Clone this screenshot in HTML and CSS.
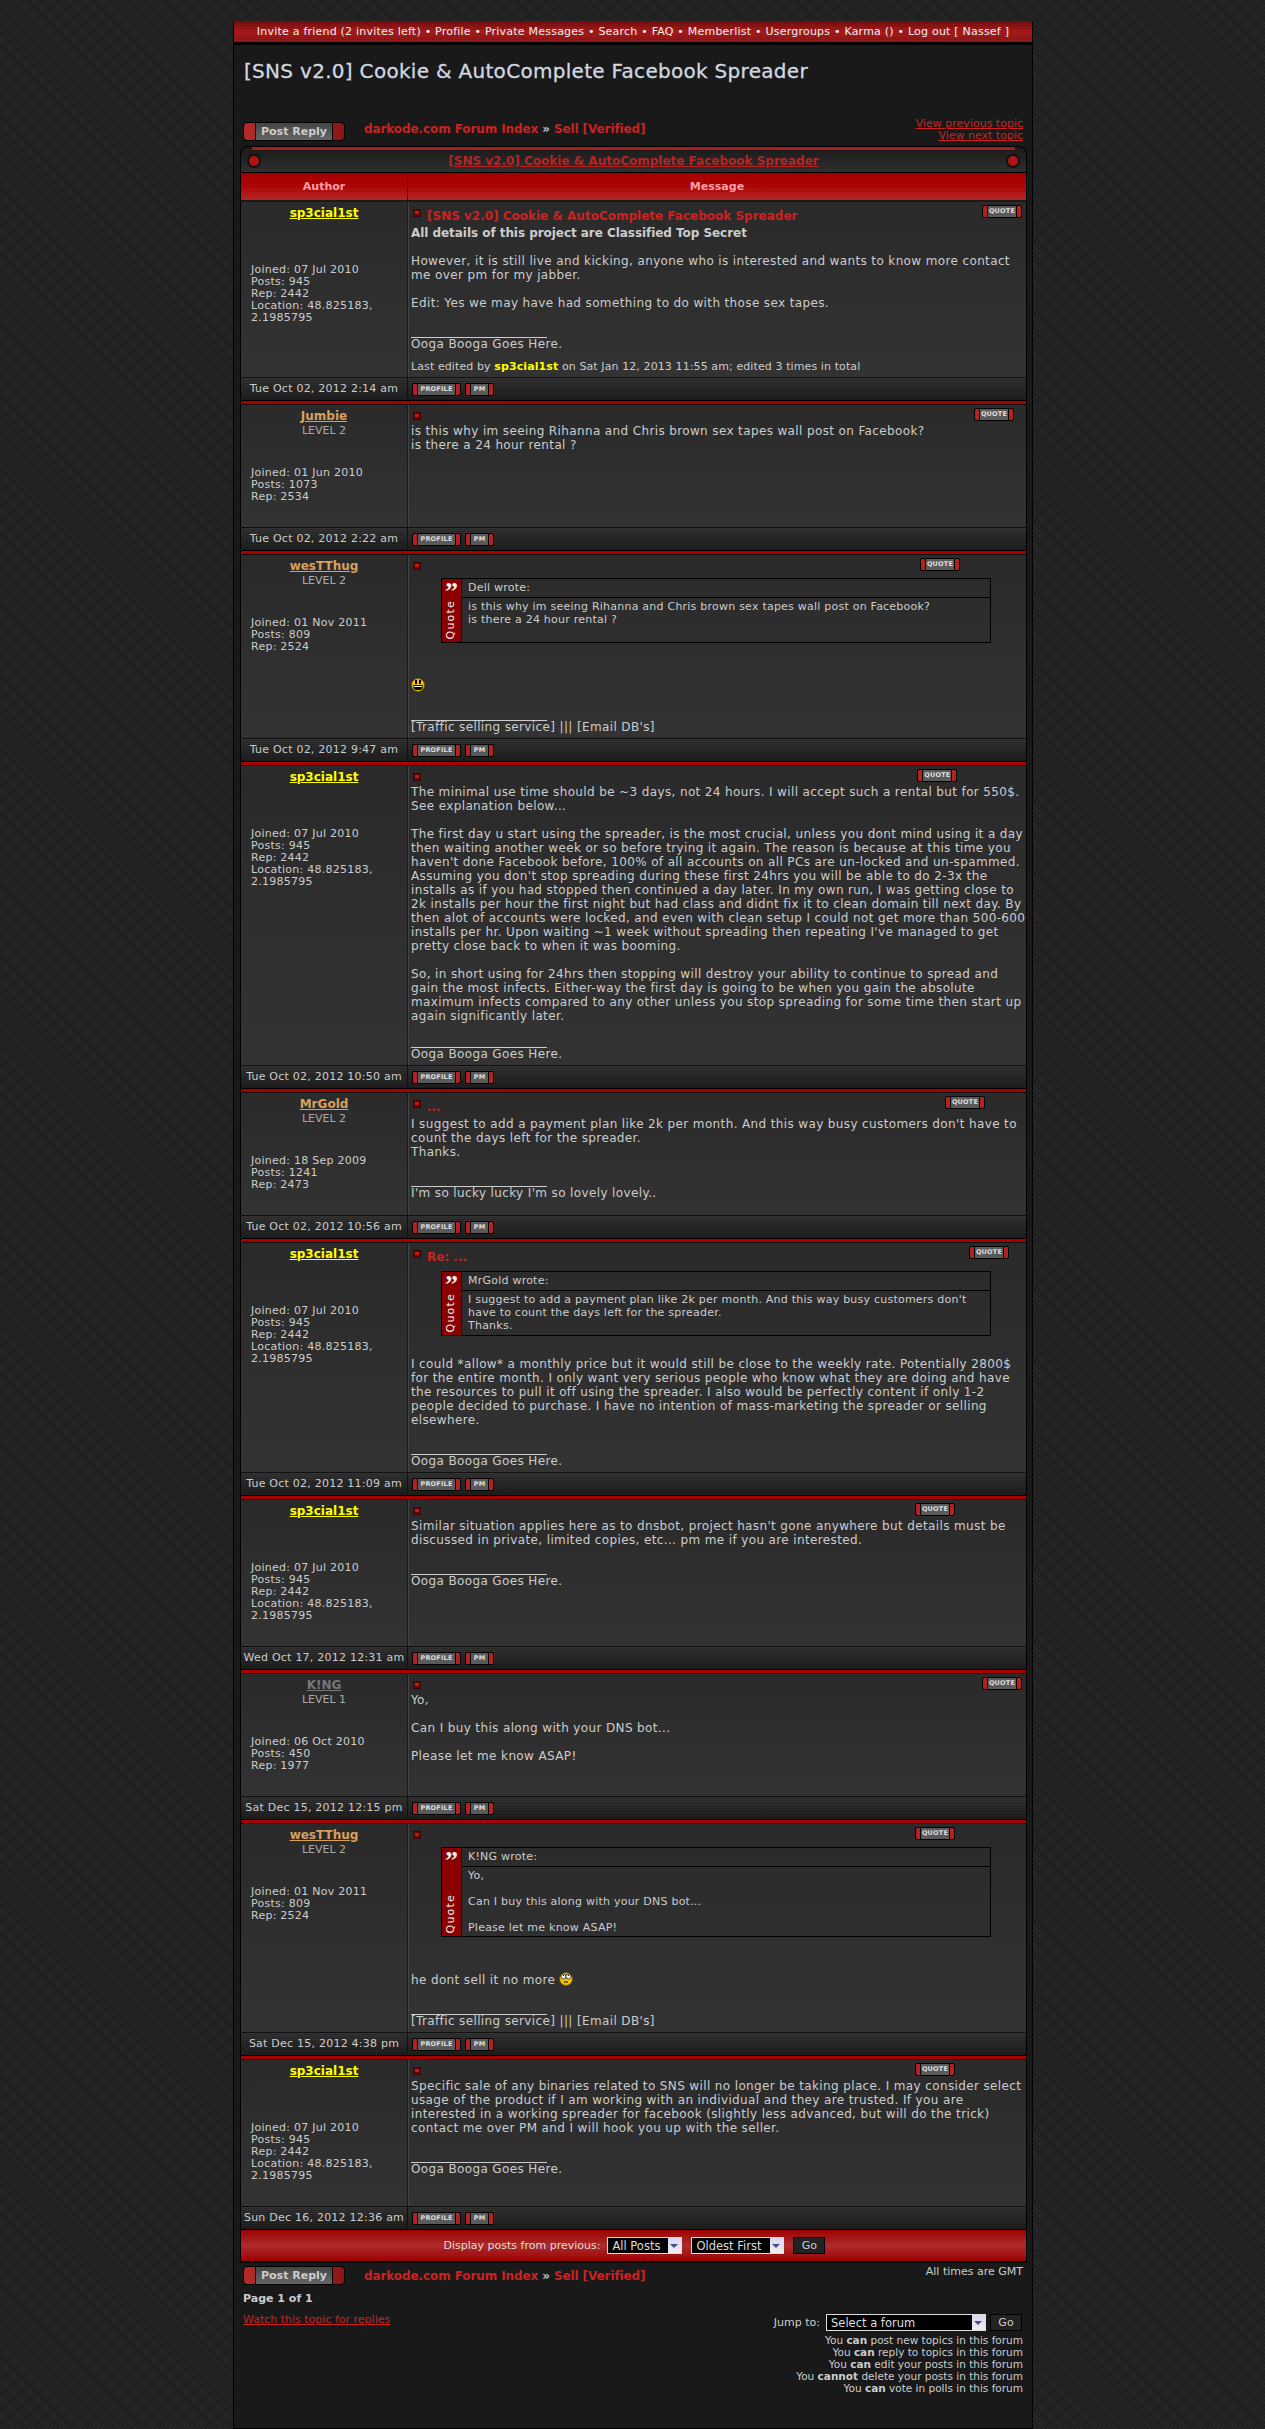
FILE: index.html
```html
<!DOCTYPE html>
<html lang="en">
<head>
  <meta charset="UTF-8" />
  <title>[SNS v2.0] Cookie &amp; AutoComplete Facebook Spreader</title>
  <link rel="stylesheet" href="styles.css">
</head>
<body>
<div class="wrap">

  <div class="topnav">
    Invite a friend (2 invites left) &bull; Profile &bull; Private Messages &bull; Search &bull; FAQ &bull; Memberlist &bull; Usergroups &bull; Karma () &bull; Log out [ Nassef ]
  </div>

  <h1 class="page-title">[SNS v2.0] Cookie &amp; AutoComplete Facebook Spreader</h1>

  <div class="bar-top">
    <a class="reply-btn"><span>Post Reply</span></a>
    <div class="crumbs"><a>darkode.com Forum Index</a> <i>&raquo;</i> <a>Sell [Verified]</a></div>
    <div class="topic-links"><a>View previous topic</a><a>View next topic</a></div>
  </div>

  <div class="cat-head">
    <span class="dot"></span>
    <a>[SNS v2.0] Cookie &amp; AutoComplete Facebook Spreader</a>
    <span class="dot"></span>
  </div>

  <div class="topic">
    <div class="head-row">
      <div class="head-author">Author</div>
      <div class="head-msg">Message</div>
    </div>

    <!-- post 1 -->
    <div class="post">
      <div class="author">
        <div class="author-top"><a class="name name-gold">sp3cial1st</a></div>
        <div class="details">Joined: 07 Jul 2010<br>Posts: 945<br>Rep: 2442<br>Location: 48.825183,<br>2.1985795</div>
      </div>
      <div class="msg">
        <div class="msg-head head-subject">
          <span class="mini-icon"></span>
          <span class="subject">[SNS v2.0] Cookie &amp; AutoComplete Facebook Spreader</span>
          <a class="btn btn-quote q-a">QUOTE</a>
        </div>
        <div class="text">
          <b>All details of this project are Classified Top Secret</b><br><br>
          However, it is still live and kicking, anyone who is interested and wants to know more contact<br>
          me over pm for my jabber.<br><br>
          Edit: Yes we may have had something to do with those sex tapes.
        </div>
        <div class="sig">Ooga Booga Goes Here.</div>
        <div class="edited">Last edited by <b>sp3cial1st</b> on Sat Jan 12, 2013 11:55 am; edited 3 times in total</div>
      </div>
    </div>
    <div class="post-foot">
      <div class="stamp">Tue Oct 02, 2012 2:14 am</div>
      <div class="foot-btns"><a class="btn btn-profile">PROFILE</a><a class="btn btn-pm">PM</a></div>
    </div>
    <div class="post-sep"></div>

    <!-- post 2 -->
    <div class="post">
      <div class="author">
        <div class="author-top"><a class="name name-tan">Jumbie</a><div class="level">LEVEL 2</div></div>
        <div class="details">Joined: 01 Jun 2010<br>Posts: 1073<br>Rep: 2534</div>
      </div>
      <div class="msg">
        <div class="msg-head">
          <span class="mini-icon"></span>
          <a class="btn btn-quote q-b">QUOTE</a>
        </div>
        <div class="text">
          is this why im seeing Rihanna and Chris brown sex tapes wall post on Facebook?<br>
          is there a 24 hour rental ?
        </div>
      </div>
    </div>
    <div class="post-foot">
      <div class="stamp">Tue Oct 02, 2012 2:22 am</div>
      <div class="foot-btns"><a class="btn btn-profile">PROFILE</a><a class="btn btn-pm">PM</a></div>
    </div>
    <div class="post-sep"></div>

    <!-- post 3 -->
    <div class="post">
      <div class="author">
        <div class="author-top"><a class="name name-tan">wesTThug</a><div class="level">LEVEL 2</div></div>
        <div class="details">Joined: 01 Nov 2011<br>Posts: 809<br>Rep: 2524</div>
      </div>
      <div class="msg">
        <div class="msg-head">
          <span class="mini-icon"></span>
          <a class="btn btn-quote q-c">QUOTE</a>
        </div>
        <div class="quote">
          <div class="quote-side"><span class="quote-mark">&rdquo;</span><span class="quote-word">Quote</span></div>
          <div class="quote-body">
            <div class="quote-who">Dell wrote:</div>
            <div class="quote-text">is this why im seeing Rihanna and Chris brown sex tapes wall post on Facebook?<br>is there a 24 hour rental ?</div>
          </div>
        </div>
        <div class="text">
          <br>
          <svg class="smile" viewBox="0 0 14 14"><circle cx="7" cy="7" r="6.5" fill="#f7c600" stroke="#6b5200"/><rect x="4" y="2" width="2" height="4" fill="#000"/><rect x="8" y="2" width="2" height="4" fill="#000"/><path d="M2 7h10l-1 4-2 1H5l-2-1z" fill="#000"/><path d="M3 8h8v1H3z" fill="#fff"/></svg>
        </div>
        <div class="sig">[Traffic selling service] ||| [Email DB's]</div>
      </div>
    </div>
    <div class="post-foot">
      <div class="stamp">Tue Oct 02, 2012 9:47 am</div>
      <div class="foot-btns"><a class="btn btn-profile">PROFILE</a><a class="btn btn-pm">PM</a></div>
    </div>
    <div class="post-sep"></div>

    <!-- post 4 -->
    <div class="post">
      <div class="author">
        <div class="author-top"><a class="name name-gold">sp3cial1st</a></div>
        <div class="details">Joined: 07 Jul 2010<br>Posts: 945<br>Rep: 2442<br>Location: 48.825183,<br>2.1985795</div>
      </div>
      <div class="msg">
        <div class="msg-head">
          <span class="mini-icon"></span>
          <a class="btn btn-quote q-f">QUOTE</a>
        </div>
        <div class="text">
          The minimal use time should be ~3 days, not 24 hours. I will accept such a rental but for 550$.<br>
          See explanation below...<br><br>
          The first day u start using the spreader, is the most crucial, unless you dont mind using it a day<br>
          then waiting another week or so before trying it again. The reason is because at this time you<br>
          haven't done Facebook before, 100% of all accounts on all PCs are un-locked and un-spammed.<br>
          Assuming you don't stop spreading during these first 24hrs you will be able to do 2-3x the<br>
          installs as if you had stopped then continued a day later. In my own run, I was getting close to<br>
          2k installs per hour the first night but had class and didnt fix it to clean domain till next day. By<br>
          then alot of accounts were locked, and even with clean setup I could not get more than 500-600<br>
          installs per hr. Upon waiting ~1 week without spreading then repeating I've managed to get<br>
          pretty close back to when it was booming.<br><br>
          So, in short using for 24hrs then stopping will destroy your ability to continue to spread and<br>
          gain the most infects. Either-way the first day is going to be when you gain the absolute<br>
          maximum infects compared to any other unless you stop spreading for some time then start up<br>
          again significantly later.
        </div>
        <div class="sig sig-tight">Ooga Booga Goes Here.</div>
      </div>
    </div>
    <div class="post-foot">
      <div class="stamp">Tue Oct 02, 2012 10:50 am</div>
      <div class="foot-btns"><a class="btn btn-profile">PROFILE</a><a class="btn btn-pm">PM</a></div>
    </div>
    <div class="post-sep"></div>

    <!-- post 5 -->
    <div class="post">
      <div class="author">
        <div class="author-top"><a class="name name-tan">MrGold</a><div class="level">LEVEL 2</div></div>
        <div class="details">Joined: 18 Sep 2009<br>Posts: 1241<br>Rep: 2473</div>
      </div>
      <div class="msg">
        <div class="msg-head head-subject">
          <span class="mini-icon"></span>
          <span class="subject">...</span>
          <a class="btn btn-quote q-d">QUOTE</a>
        </div>
        <div class="text">
          I suggest to add a payment plan like 2k per month. And this way busy customers don't have to<br>
          count the days left for the spreader.<br>
          Thanks.
        </div>
        <div class="sig">I'm so lucky lucky I'm so lovely lovely..</div>
      </div>
    </div>
    <div class="post-foot">
      <div class="stamp">Tue Oct 02, 2012 10:56 am</div>
      <div class="foot-btns"><a class="btn btn-profile">PROFILE</a><a class="btn btn-pm">PM</a></div>
    </div>
    <div class="post-sep"></div>

    <!-- post 6 -->
    <div class="post">
      <div class="author">
        <div class="author-top"><a class="name name-gold">sp3cial1st</a></div>
        <div class="details">Joined: 07 Jul 2010<br>Posts: 945<br>Rep: 2442<br>Location: 48.825183,<br>2.1985795</div>
      </div>
      <div class="msg">
        <div class="msg-head head-subject">
          <span class="mini-icon"></span>
          <span class="subject">Re: ...</span>
          <a class="btn btn-quote q-e">QUOTE</a>
        </div>
        <div class="quote">
          <div class="quote-side"><span class="quote-mark">&rdquo;</span><span class="quote-word">Quote</span></div>
          <div class="quote-body">
            <div class="quote-who">MrGold wrote:</div>
            <div class="quote-text">I suggest to add a payment plan like 2k per month. And this way busy customers don't<br>have to count the days left for the spreader.<br>Thanks.</div>
          </div>
        </div>
        <div class="text">
          I could *allow* a monthly price but it would still be close to the weekly rate. Potentially 2800$<br>
          for the entire month. I only want very serious people who know what they are doing and have<br>
          the resources to pull it off using the spreader. I also would be perfectly content if only 1-2<br>
          people decided to purchase. I have no intention of mass-marketing the spreader or selling<br>
          elsewhere.
        </div>
        <div class="sig">Ooga Booga Goes Here.</div>
      </div>
    </div>
    <div class="post-foot">
      <div class="stamp">Tue Oct 02, 2012 11:09 am</div>
      <div class="foot-btns"><a class="btn btn-profile">PROFILE</a><a class="btn btn-pm">PM</a></div>
    </div>
    <div class="post-sep"></div>

    <!-- post 7 -->
    <div class="post">
      <div class="author">
        <div class="author-top"><a class="name name-gold">sp3cial1st</a></div>
        <div class="details">Joined: 07 Jul 2010<br>Posts: 945<br>Rep: 2442<br>Location: 48.825183,<br>2.1985795</div>
      </div>
      <div class="msg">
        <div class="msg-head">
          <span class="mini-icon"></span>
          <a class="btn btn-quote q-f">QUOTE</a>
        </div>
        <div class="text">
          Similar situation applies here as to dnsbot, project hasn't gone anywhere but details must be<br>
          discussed in private, limited copies, etc... pm me if you are interested.
        </div>
        <div class="sig">Ooga Booga Goes Here.</div>
      </div>
    </div>
    <div class="post-foot">
      <div class="stamp">Wed Oct 17, 2012 12:31 am</div>
      <div class="foot-btns"><a class="btn btn-profile">PROFILE</a><a class="btn btn-pm">PM</a></div>
    </div>
    <div class="post-sep"></div>

    <!-- post 8 -->
    <div class="post">
      <div class="author">
        <div class="author-top"><a class="name name-gray">K!NG</a><div class="level">LEVEL 1</div></div>
        <div class="details">Joined: 06 Oct 2010<br>Posts: 450<br>Rep: 1977</div>
      </div>
      <div class="msg">
        <div class="msg-head">
          <span class="mini-icon"></span>
          <a class="btn btn-quote q-a">QUOTE</a>
        </div>
        <div class="text">
          Yo,<br><br>
          Can I buy this along with your DNS bot...<br><br>
          Please let me know ASAP!
        </div>
      </div>
    </div>
    <div class="post-foot">
      <div class="stamp">Sat Dec 15, 2012 12:15 pm</div>
      <div class="foot-btns"><a class="btn btn-profile">PROFILE</a><a class="btn btn-pm">PM</a></div>
    </div>
    <div class="post-sep"></div>

    <!-- post 9 -->
    <div class="post">
      <div class="author">
        <div class="author-top"><a class="name name-tan">wesTThug</a><div class="level">LEVEL 2</div></div>
        <div class="details">Joined: 01 Nov 2011<br>Posts: 809<br>Rep: 2524</div>
      </div>
      <div class="msg">
        <div class="msg-head">
          <span class="mini-icon"></span>
          <a class="btn btn-quote q-f">QUOTE</a>
        </div>
        <div class="quote">
          <div class="quote-side"><span class="quote-mark">&rdquo;</span><span class="quote-word">Quote</span></div>
          <div class="quote-body">
            <div class="quote-who">K!NG wrote:</div>
            <div class="quote-text">Yo,<br><br>Can I buy this along with your DNS bot...<br><br>Please let me know ASAP!</div>
          </div>
        </div>
        <div class="text text-tall">
          <br>
          he dont sell it no more
          <svg class="smile" viewBox="0 0 14 14"><circle cx="7" cy="7" r="6.5" fill="#f7c600" stroke="#6b5200"/><circle cx="4.5" cy="4.5" r="2.5" fill="#fff" stroke="#000" stroke-width=".7"/><circle cx="9.5" cy="4.5" r="2.5" fill="#fff" stroke="#000" stroke-width=".7"/><rect x="4" y="3" width="1" height="1" fill="#000"/><rect x="9" y="3" width="1" height="1" fill="#000"/><path d="M5 10h4" stroke="#000"/></svg>
        </div>
        <div class="sig">[Traffic selling service] ||| [Email DB's]</div>
      </div>
    </div>
    <div class="post-foot">
      <div class="stamp">Sat Dec 15, 2012 4:38 pm</div>
      <div class="foot-btns"><a class="btn btn-profile">PROFILE</a><a class="btn btn-pm">PM</a></div>
    </div>
    <div class="post-sep"></div>

    <!-- post 10 -->
    <div class="post">
      <div class="author">
        <div class="author-top"><a class="name name-gold">sp3cial1st</a></div>
        <div class="details">Joined: 07 Jul 2010<br>Posts: 945<br>Rep: 2442<br>Location: 48.825183,<br>2.1985795</div>
      </div>
      <div class="msg">
        <div class="msg-head">
          <span class="mini-icon"></span>
          <a class="btn btn-quote q-f">QUOTE</a>
        </div>
        <div class="text">
          Specific sale of any binaries related to SNS will no longer be taking place. I may consider select<br>
          usage of the product if I am working with an individual and they are trusted. If you are<br>
          interested in a working spreader for facebook (slightly less advanced, but will do the trick)<br>
          contact me over PM and I will hook you up with the seller.
        </div>
        <div class="sig">Ooga Booga Goes Here.</div>
      </div>
    </div>
    <div class="post-foot">
      <div class="stamp">Sun Dec 16, 2012 12:36 am</div>
      <div class="foot-btns"><a class="btn btn-profile">PROFILE</a><a class="btn btn-pm">PM</a></div>
    </div>

    <div class="display-bar">
      <span>Display posts from previous:</span>
      <span class="pick pick-posts"><select><option>All Posts</option></select></span>
      <span class="pick pick-order"><select><option>Oldest First</option></select></span>
      <button class="go">Go</button>
    </div>
  </div>

  <div class="bar-bottom">
    <a class="reply-btn"><span>Post Reply</span></a>
    <div class="crumbs"><a>darkode.com Forum Index</a> <i>&raquo;</i> <a>Sell [Verified]</a></div>
    <div class="times">All times are GMT</div>
  </div>

  <div class="page-foot">
    <div class="page-left">
      <div class="pages">Page 1 of 1</div>
      <a class="watch">Watch this topic for replies</a>
    </div>
    <div class="page-right">
      <div class="jump">
        <span>Jump to:</span>
        <span class="pick pick-forum"><select><option>Select a forum</option></select></span>
        <button class="go">Go</button>
      </div>
      <div class="perms">
        You <b>can</b> post new topics in this forum<br>
        You <b>can</b> reply to topics in this forum<br>
        You <b>can</b> edit your posts in this forum<br>
        You <b>cannot</b> delete your posts in this forum<br>
        You <b>can</b> vote in polls in this forum
      </div>
    </div>
  </div>

</div>
</body>
</html>
```

FILE: styles.css
```css
body {
  margin: 0;
  background-color: #232323;
  background-image: repeating-linear-gradient(45deg, #282828 0, #282828 1px, #1f1f1f 1px, #1f1f1f 3px);
  font-family: "DejaVu Sans", Verdana, sans-serif;
  font-size: 11px;
  color: #ccc;
}

a {
  color: #cc2222;
}

.wrap {
  box-sizing: border-box;
  width: 800px;
  height: 2408px;
  margin: 21px 0 0 233px;
  background-color: #191919;
  border: 1px solid #000;
  border-top: 0;
}

/* top bar */
.topnav {
  height: 21px;
  line-height: 21px;
  text-align: center;
  font-size: 11px;
  letter-spacing: 0.22px;
  color: #eee;
  background: repeating-linear-gradient(0deg, rgba(0,0,0,0.1) 0, rgba(0,0,0,0.1) 1px, transparent 1px, transparent 2px),
              linear-gradient(#70100f, #a91d1d 50%, #8a1a1a);
  border-bottom: 3px solid #000;
}

.page-title {
  margin: 14px 0 0 10px;
  height: 63px;
  font-size: 20px;
  line-height: 24px;
  letter-spacing: 0.3px;
  font-weight: normal;
  color: #d0d8e0;
  -webkit-text-stroke: 0.3px #d0d8e0;
}

/* buttons and crumbs */
.bar-top,
.bar-bottom {
  display: flex;
  padding: 0 9px;
  height: 24px;
}

.reply-btn {
  box-sizing: border-box;
  display: block;
  width: 102px;
  height: 19px;
  border: 1px solid #000;
  border-radius: 4px;
  background: linear-gradient(90deg, #b32a2a, #8c1616);
}

.reply-btn span {
  display: block;
  height: 17px;
  margin: 0 11px;
  line-height: 17px;
  text-align: center;
  font-size: 11px;
  font-weight: bold;
  color: #ccc;
  background: linear-gradient(#444, #666);
  border-left: 1px solid #000;
  border-right: 1px solid #000;
}

.crumbs {
  margin-left: 19px;
  font-size: 12px;
  line-height: 15px;
  font-weight: bold;
  letter-spacing: -0.1px;
  color: #cc2222;
}

.crumbs i {
  font-style: normal;
  color: #b8c4cc;
}

.topic-links {
  margin-left: auto;
  margin-top: -4px;
  font-size: 11px;
  line-height: 12px;
  text-align: right;
}

.topic-links a {
  display: block;
  text-decoration: underline;
}

/* table */
.cat-head {
  display: flex;
  align-items: center;
  justify-content: space-between;
  box-sizing: border-box;
  height: 26px;
  margin: 0 5px 0 6px;
  padding: 3px 8px 0;
  background: linear-gradient(#1a1a1a, #2e2e2e);
  border: 1px solid #000;
  border-bottom: 0;
  border-radius: 8px 8px 0 0;
  font-size: 12px;
  font-weight: bold;
  position: relative;
}

.cat-head::before {
  content: "";
  position: absolute;
  left: 11px;
  right: 11px;
  top: 0;
  height: 3px;
  background: #a51c1c;
}

.cat-head a {
  text-decoration: underline;
  color: #b52525;
}

.dot {
  width: 10px;
  height: 10px;
  border-radius: 50%;
  background: #b01414;
  box-shadow: 0 0 0 2px #111;
}

.topic {
  margin: 0 5px 0 6px;
  border: 1px solid #000;
  border-bottom: 2px solid #000;
  background: #1a1a1a;
}

.head-row {
  display: grid;
  grid-template-columns: 167px 1fr;
  height: 27px;
  margin-bottom: 2px;
  line-height: 27px;
  text-align: center;
  font-weight: bold;
  color: #ff9fa8;
  background: repeating-linear-gradient(0deg, rgba(0,0,0,0.08) 0, rgba(0,0,0,0.08) 1px, transparent 1px, transparent 2px),
              linear-gradient(#a80000, #ad0808 50%, #b92a2a);
}

.head-author {
  border-right: 1px solid #7a0000;
}

.post {
  display: grid;
  grid-template-columns: 167px 1fr;
  background: linear-gradient(#2a2a2a, #333);
}

.author {
  padding: 4px 0 24px 10px;
  border-right: 1px solid #1a1a1a;
  box-shadow: 1px 0 0 #444;
}

.author-top {
  height: 58px;
  margin-left: -10px;
  text-align: center;
}

.name {
  display: inline-block;
  font-size: 12px;
  line-height: 14px;
  font-weight: bold;
  text-decoration: underline;
}

.name-gold { color: #ffff00; }
.name-tan { color: #d8a05c; }
.name-gray { color: #777; }

.level {
  font-size: 11px;
  line-height: 12px;
  margin-top: 2px;
  color: #aaa;
}

.details {
  font-size: 11px;
  line-height: 12px;
  letter-spacing: 0.25px;
}

.msg {
  position: relative;
  padding: 0 3px 4px 3px;
  font-size: 12px;
  line-height: 14px;
  letter-spacing: 0.37px;
}

.msg-head {
  display: flex;
  height: 19px;
  align-items: flex-start;
}

.head-subject {
  height: 24px;
}

.mini-icon {
  position: relative;
  box-sizing: border-box;
  width: 8px;
  height: 8px;
  margin: 7px 5px 0 2px;
  background: #5c0808;
  border: 1px solid #3a0505;
}

.mini-icon::after {
  content: "";
  position: absolute;
  left: 1px;
  top: 1px;
  width: 4px;
  height: 3px;
  background: #c81414;
}

.head-subject .mini-icon {
  margin-right: 6px;
}

.subject {
  margin-top: 7px;
  font-weight: bold;
  letter-spacing: 0;
  color: #cc2222;
}

.btn {
  box-sizing: border-box;
  display: block;
  height: 13px;
  padding: 0 5px;
  line-height: 11px;
  text-align: center;
  font-family: "DejaVu Sans", sans-serif;
  font-size: 6.5px;
  font-weight: bold;
  letter-spacing: 0.2px;
  color: #ddd;
  background: linear-gradient(90deg, #b52020 4px, #000 4px, #000 5px, #5a5a5a 5px, #5a5a5a calc(100% - 5px), #000 calc(100% - 5px), #000 calc(100% - 4px), #b52020 calc(100% - 4px));
  border: 1px solid #000;
  border-radius: 2px;
}

.btn-quote {
  width: 40px;
  margin: 3px 0 0 auto;
}

/* the quote button does not sit at the same place on every post */
.q-a { margin-right: 1px; }
.q-b { margin-right: 9px; }
.q-c { margin-right: 63px; }
.q-d { margin-right: 38px; }
.q-e { margin-right: 14px; }
.q-f { margin-right: 68px; }

.quote {
  display: flex;
  width: 550px;
  min-height: 65px;
  box-sizing: border-box;
  margin: 4px 0 21px 30px;
  border: 1px solid #000;
}

.quote-side {
  position: relative;
  flex: none;
  width: 19px;
  background: #8a0000;
  color: #eee;
  border-right: 1px solid #000;
}

.quote-mark {
  position: absolute;
  left: 3px;
  top: 1px;
  font-size: 26px;
  line-height: 24px;
  font-weight: bold;
  font-family: "Liberation Serif", serif;
}

.quote-word {
  position: absolute;
  left: 2px;
  bottom: 3px;
  writing-mode: vertical-rl;
  transform: rotate(180deg);
  font-size: 11px;
  line-height: 14px;
  letter-spacing: 1.2px;
}

.quote-body {
  flex: 1;
  font-size: 11px;
  letter-spacing: 0.23px;
}

.quote-who {
  height: 18px;
  padding-left: 6px;
  line-height: 18px;
  border-bottom: 1px solid #000;
}

.quote-text {
  padding: 2px 6px;
  line-height: 13px;
  white-space: nowrap;
}

.text {
  white-space: nowrap;
}

.text-tall {
  margin-bottom: 2px;
}

.text b {
  letter-spacing: -0.05px;
}

.sig {
  margin-top: 14px;
}

.sig-tight {
  margin-top: 11px;
}

.sig::before {
  content: "";
  display: block;
  width: 136px;
  height: 14px;
  border-bottom: 1px solid #ccc;
  box-sizing: border-box;
  margin-bottom: -1px;
}

.text .smile {
  width: 14px;
  height: 14px;
  vertical-align: -2px;
}

.edited {
  margin-top: 10px;
  font-size: 11px;
  line-height: 12px;
  letter-spacing: 0.1px;
}

.edited b {
  color: #ffff00;
}

.post-foot {
  display: grid;
  grid-template-columns: 167px 1fr;
  height: 23px;
  align-items: center;
  border-top: 1px solid #111;
  box-sizing: border-box;
  background: repeating-linear-gradient(0deg, rgba(0,0,0,0.15) 0, rgba(0,0,0,0.15) 1px, transparent 1px, transparent 2px),
              linear-gradient(#333, #1e1e1e);
}

.stamp {
  height: 100%;
  line-height: 22px;
  text-align: center;
  font-size: 11px;
  letter-spacing: 0.23px;
  white-space: nowrap;
  border-right: 1px solid #111;
}

.foot-btns {
  display: flex;
  gap: 4px;
  padding-left: 4px;
}

.btn-profile { width: 49px; }
.btn-pm { width: 29px; }

.post-sep {
  box-sizing: border-box;
  height: 5px;
  background: #a80000;
  border-top: 1px solid #000;
  border-bottom: 1px solid #111;
}

.display-bar {
  display: flex;
  align-items: center;
  justify-content: center;
  gap: 4px;
  height: 32px;
  box-sizing: border-box;
  padding-left: 2px;
  border-top: 1px solid #000;
  font-size: 11px;
  color: #ddd;
  background: repeating-linear-gradient(0deg, rgba(0,0,0,0.08) 0, rgba(0,0,0,0.08) 1px, transparent 1px, transparent 2px),
              linear-gradient(#a80000, #b92a2a 50%, #a80000);
}

.pick {
  position: relative;
  display: block;
  height: 17px;
  box-sizing: border-box;
  border: 1px solid #ddd;
  background: #000;
}

.pick::after {
  content: "";
  position: absolute;
  right: 0;
  top: 0;
  width: 13px;
  height: 15px;
  background: linear-gradient(#d8d8f0, #eee);
}

.pick::before {
  content: "";
  position: absolute;
  z-index: 1;
  right: 3px;
  top: 6px;
  border: 4px solid transparent;
  border-top: 4px solid #4a4a8c;
  border-bottom: 0;
}

.pick select {
  appearance: none;
  display: block;
  width: 100%;
  height: 15px;
  padding: 0 0 0 4px;
  border: 0;
  background: #000;
  color: #ddd;
  font-family: "DejaVu Sans", Verdana, sans-serif;
  font-size: 11.5px;
}

.pick-posts { width: 75px; margin-left: 3px; }
.pick-order { width: 93px; margin: 0 5px; }
.pick-forum { width: 160px; }

.go {
  width: 32px;
  height: 17px;
  padding: 0;
  border: 1px solid #000;
  background: #222;
  color: #ccc;
  font-family: "DejaVu Sans", Verdana, sans-serif;
  font-size: 11px;
}

.bar-bottom {
  padding-top: 3px;
  box-sizing: border-box;
  height: 29px;
}

.bar-bottom .crumbs {
  line-height: 20px;
}

.times {
  margin-left: auto;
  font-size: 11px;
  line-height: 12px;
}

.page-foot {
  display: flex;
  justify-content: space-between;
  padding: 0 9px;
}

.pages {
  font-weight: bold;
  line-height: 14px;
}

.watch {
  display: block;
  margin-top: 7px;
  font-size: 11px;
  text-decoration: underline;
}

.page-right {
  margin-top: 22px;
  text-align: right;
}

.jump {
  display: flex;
  align-items: center;
  justify-content: flex-end;
  gap: 6px;
  font-size: 11px;
}

.jump .go {
  margin-left: -2px;
  margin-right: 1px;
}

.perms {
  margin-top: 3px;
  font-size: 10.5px;
  line-height: 12px;
}
```
